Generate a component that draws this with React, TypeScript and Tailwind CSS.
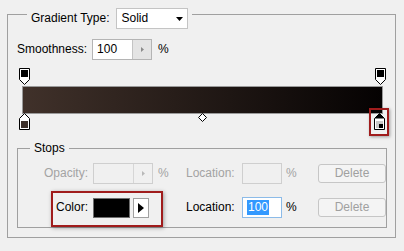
import React from "react";

function TopStop() {
  return (
    <svg width="11" height="17" viewBox="0 0 11 17">
      <path d="M0.5 0.5H10.5V11.5L5.5 16.5L0.5 11.5Z" fill="#fff" stroke="#000" />
      <rect x="2" y="2" width="7" height="7" fill="#000" />
    </svg>
  );
}

function BottomStop({ color, selected }: { color: string; selected?: boolean }) {
  return (
    <svg width="11" height="17" viewBox="0 0 11 17">
      <path d="M5.5 0.5L10.5 5.5V16.5H0.5V5.5Z" fill="#fff" stroke="#000" />
      {selected && <path d="M5.5 0.5L10.5 5.5H0.5Z" fill="#000" />}
      {selected ? (
        <>
          <rect x="2" y="8" width="7" height="7" fill="#c8c8c8" />
          <rect x="5" y="11" width="4" height="4" fill="#000" />
        </>
      ) : (
        <rect x="2" y="8" width="7" height="7" fill={color} />
      )}
    </svg>
  );
}

function Spinner({ disabled }: { disabled?: boolean }) {
  return (
    <div
      className={`w-[19px] h-full flex items-center justify-center border-l ${
        disabled ? "border-[#d6d6d6] bg-[#f0f0f0]" : "border-[#c4c4c4] bg-[#e4e4e4]"
      }`}
    >
      <svg width="3" height="5" viewBox="0 0 3 5">
        <path d="M0 0L3 2.5L0 5Z" fill={disabled ? "#b8b8b8" : "#8a8a8a"} />
      </svg>
    </div>
  );
}

function DeleteButton() {
  return (
    <div className="w-[68px] h-[19px] rounded-[3px] border border-[#c6c6c6] bg-[#f4f4f4] text-[#a0a0a0] flex items-center justify-center">
      Delete
    </div>
  );
}

export default function App() {
  return (
    <div className="w-[404px] h-[251px] bg-[#f0f0f0] font-['Liberation_Sans',Arial,sans-serif] text-[12px] leading-[15px] text-black pt-[14px] pl-[7px]">
      <div className="w-[389px] h-[224px] border border-[#a0a0a0]">
        {/* header: gradient type */}
        <div className="-mt-[7px] ml-[19px] w-fit px-[4px] bg-[#f0f0f0] flex items-center gap-[6px]">
          <span>Gradient Type:</span>
          <div className="w-[72px] h-[21px] bg-white border border-[#c4c4c4] flex items-center justify-between pl-[5px] pr-[4px]">
            <span>Solid</span>
            <svg width="7" height="4" viewBox="0 0 7 4">
              <path d="M0 0H7L3.5 4Z" fill="#000" />
            </svg>
          </div>
        </div>

        {/* smoothness */}
        <div className="mt-[10px] pl-[9px] flex items-center">
          <span>Smoothness:</span>
          <div className="ml-[5px] w-[60px] h-[21px] bg-white border border-[#b4b4b4] flex items-center">
            <span className="flex-1 pl-[4px]">100</span>
            <Spinner />
          </div>
          <span className="ml-[6px]">%</span>
        </div>

        {/* gradient bar with stops */}
        <div className="relative mt-[6px] h-[72px] pt-[20px]">
          <div className="ml-[14px] w-[361px] h-[28px] border border-[#9a9a9a] bg-[linear-gradient(to_right,#40312a,#050202)]" />
          <div className="absolute left-[11px] top-[2px] flex">
            <TopStop />
          </div>
          <div className="absolute left-[367px] top-[2px] flex">
            <TopStop />
          </div>
          <div className="absolute left-[11px] top-[47px] flex">
            <BottomStop color="#3d302a" />
          </div>
          <div className="absolute left-[366px] top-[47px] flex">
            <BottomStop color="#000" selected />
          </div>
          <svg className="absolute left-[190px] top-[47px]" width="9" height="9" viewBox="0 0 9 9">
            <path d="M4.5 0.5L8.5 4.5L4.5 8.5L0.5 4.5Z" fill="#fff" stroke="#000" />
          </svg>
          <div className="absolute left-[361px] top-[42px] w-[20px] h-[28px] border-2 border-[#a01c1c] shadow-[1px_1px_3px_rgba(0,0,0,0.35)]" />
        </div>

        {/* stops group */}
        <div className="relative mt-[10px] ml-[9px] w-[370px] h-[80px] border border-[#a0a0a0]">
          <div className="-mt-[8px] ml-[12px] w-fit px-[4px] bg-[#f0f0f0]">Stops</div>

          <div className="mt-[7px] h-[21px] flex items-center">
            <span className="w-[70px] text-right text-[#a3a3a3]">Opacity:</span>
            <div className="ml-[5px] w-[60px] h-[21px] border border-[#cfcfcf] flex items-center">
              <span className="flex-1" />
              <Spinner disabled />
            </div>
            <span className="ml-[5px] w-[28px] text-[#a3a3a3]">%</span>
            <span className="w-[51px] text-[#a3a3a3]">Location:</span>
            <div className="ml-[5px] w-[40px] h-[21px] border border-[#cfcfcf]" />
            <span className="ml-[4px] w-[32px] text-[#a3a3a3]">%</span>
            <DeleteButton />
          </div>

          <div className="mt-[13px] h-[21px] flex items-center">
            <span className="w-[70px] text-right">Color:</span>
            <div className="ml-[5px] w-[60px] flex items-center">
              <div className="w-[37px] h-[20px] bg-black border border-[#6e6e6e]" />
              <div className="ml-[3px] w-[16px] h-[20px] bg-white border border-[#a0a0a0] flex items-center justify-center">
                <svg width="6" height="10" viewBox="0 0 6 10">
                  <path d="M0 0L6 5L0 10Z" fill="#000" />
                </svg>
              </div>
            </div>
            <span className="ml-[5px] w-[28px]" />
            <span className="w-[51px]">Location:</span>
            <div className="ml-[5px] w-[40px] h-[21px] bg-white border border-[#8cbbe8] flex items-center pl-[4px]">
              <span className="bg-[#3399ff] text-white px-[1px]">100</span>
            </div>
            <span className="ml-[4px] w-[32px]">%</span>
            <DeleteButton />
          </div>

          <div className="absolute left-[33px] top-[42px] w-[112px] h-[36px] border-2 border-[#a01c1c] shadow-[1px_1px_4px_rgba(0,0,0,0.35)]" />
        </div>
      </div>
    </div>
  );
}
